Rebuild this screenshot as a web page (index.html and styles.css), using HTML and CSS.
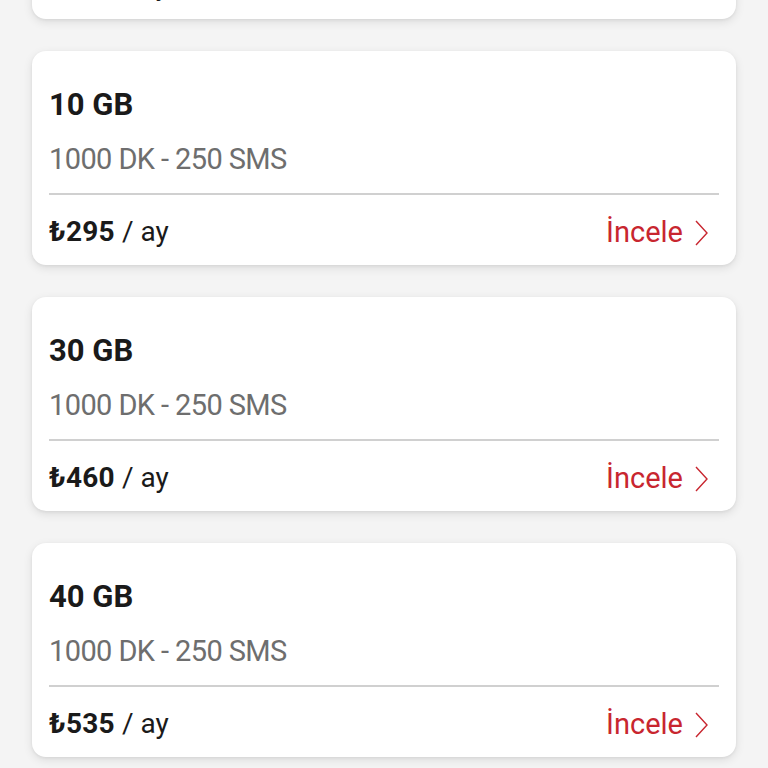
FILE: index.html
```html
<!DOCTYPE html>
<html lang="tr">
<head>
<meta charset="utf-8">
<link rel="stylesheet" href="styles.css">
</head>
<body>
<div class="list">
  <div class="card">
    <div class="title">5 GB</div>
    <div class="sub">1000 DK - 250 SMS</div>
    <div class="divider"></div>
    <div class="foot">
      <div class="price"><b>₺240</b> / ay</div>
      <div class="link">İncele <svg class="chev" viewBox="0 0 13 26" width="13" height="26"><path d="M1 1 L12 13 L1 25" fill="none" stroke="#c8262f" stroke-width="1.4"/></svg></div>
    </div>
  </div>
  <div class="card">
    <div class="title">10 GB</div>
    <div class="sub">1000 DK - 250 SMS</div>
    <div class="divider"></div>
    <div class="foot">
      <div class="price"><b>₺295</b> / ay</div>
      <div class="link">İncele <svg class="chev" viewBox="0 0 13 26" width="13" height="26"><path d="M1 1 L12 13 L1 25" fill="none" stroke="#c8262f" stroke-width="1.4"/></svg></div>
    </div>
  </div>
  <div class="card">
    <div class="title">30 GB</div>
    <div class="sub">1000 DK - 250 SMS</div>
    <div class="divider"></div>
    <div class="foot">
      <div class="price"><b>₺460</b> / ay</div>
      <div class="link">İncele <svg class="chev" viewBox="0 0 13 26" width="13" height="26"><path d="M1 1 L12 13 L1 25" fill="none" stroke="#c8262f" stroke-width="1.4"/></svg></div>
    </div>
  </div>
  <div class="card">
    <div class="title">40 GB</div>
    <div class="sub">1000 DK - 250 SMS</div>
    <div class="divider"></div>
    <div class="foot">
      <div class="price"><b>₺535</b> / ay</div>
      <div class="link">İncele <svg class="chev" viewBox="0 0 13 26" width="13" height="26"><path d="M1 1 L12 13 L1 25" fill="none" stroke="#c8262f" stroke-width="1.4"/></svg></div>
    </div>
  </div>
</div>
</body>
</html>
```
FILE: styles.css
```css
html, body {
  margin: 0;
  padding: 0;
  background: #f4f4f4;
  overflow: hidden;
  height: 768px;
}
body {
  font-family: Roboto, "Noto Sans", sans-serif;
  color: #1a1a1a;
}
.list {
  display: flex;
  flex-direction: column;
  gap: 32px;
  padding: 0 32px;
  margin-top: -195px;
}
.card {
  background: #fff;
  border-radius: 14px;
  height: 214px;
  box-sizing: border-box;
  padding: 0 17px;
  box-shadow: 0 3px 10px rgba(0,0,0,0.10), 0 1px 3px rgba(0,0,0,0.06);
  display: flex;
  flex-direction: column;
}
.title {
  font-weight: 700;
  font-size: 31px;
  line-height: 36px;
  margin-top: 36px;
  letter-spacing: 0;
}
.sub {
  font-size: 29px;
  line-height: 32px;
  margin-top: 20px;
  color: #6e6e6e;
  letter-spacing: -0.6px;
}
.divider {
  height: 2px;
  background: #d0d0d0;
  margin-top: 18px;
}
.foot {
  display: flex;
  justify-content: space-between;
  align-items: center;
  margin-top: 20px;
}
.price {
  font-size: 28px;
  line-height: 34px;
  color: #1a1a1a;
}
.price b {
  font-weight: 700;
  letter-spacing: 0.3px;
}
.link {
  font-size: 29px;
  line-height: 34px;
  color: #c8262f;
  display: flex;
  align-items: center;
  gap: 12px;
  padding-right: 11px;
}
.chev {
  display: block;
  margin-top: 2px;
}
```
